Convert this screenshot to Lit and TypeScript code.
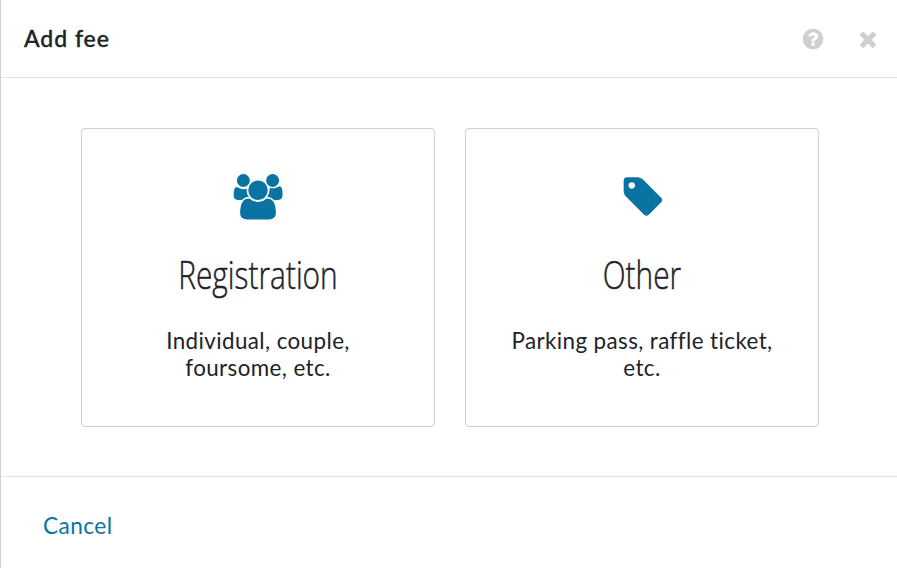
import { LitElement, html, css, svg } from "lit";
import { customElement, property } from "lit/decorators.js";

const icons = {
  help: {
    box: "0 0 1792 1792",
    path: "M1024 1376v-192q0-14-9-23t-23-9h-192q-14 0-23 9t-9 23v192q0 14 9 23t23 9h192q14 0 23-9t9-23zm256-672q0-88-55.5-163t-138.5-116-170-41q-243 0-371 213-15 24 8 42l132 100q7 6 19 6 16 0 25-12 53-68 86-92 34-24 86-24 48 0 85.5 26t37.5 59q0 38-20 61t-68 45q-63 28-115.5 86.5t-52.5 125.5v36q0 14 9 23t23 9h192q14 0 23-9t9-23q0-19 21.5-49.5t54.5-49.5q32-18 49-28.5t46-35 44.5-48 28-60.5 12.5-81zm384 192q0 209-103 385.5t-279.5 279.5-385.5 103-385.5-103-279.5-279.5-103-385.5 103-385.5 279.5-279.5 385.5-103 385.5 103 279.5 279.5 103 385.5z",
  },
  close: {
    box: "0 0 1792 1792",
    path: "M1490 1322q0 40-28 68l-136 136q-28 28-68 28t-68-28l-294-294-294 294q-28 28-68 28t-68-28l-136-136q-28-28-28-68t28-68l294-294-294-294q-28-28-28-68t28-68l136-136q28-28 68-28t68 28l294 294 294-294q28-28 68-28t68 28l136 136q28 28 28 68t-28 68l-294 294 294 294q28 28 28 68z",
  },
  tag: {
    box: "0 0 1792 1792",
    path: "M576 448q0-53-37.5-90.5t-90.5-37.5-90.5 37.5-37.5 90.5 37.5 90.5 90.5 37.5 90.5-37.5 37.5-90.5zm1067 576q0 53-37 90l-491 492q-39 37-91 37-53 0-90-37l-715-716q-38-37-64.5-101t-26.5-117v-416q0-52 38-90t90-38h416q53 0 117 26.5t102 64.5l715 714q37 39 37 91z",
  },
  users: {
    box: "0 0 2048 1792",
    path: "M657 896q-162 5-265 128h-134q-82 0-138-40.5t-56-118.5q0-353 124-353 6 0 43.5 21t97.5 42.5 119 21.5q67 0 133-23-5 37-5 66 0 159 93 287zm1071 637q0 120-73 189.5t-194 69.5h-874q-121 0-194-69.5t-73-189.5q0-53 3.5-103.5t14-109 26.5-108.5 43-97.5 62-81 85.5-53.5 111.5-20q10 0 43 21.5t73 48 107 48 135 21.5 135-21.5 107-48 73-48 43-21.5q61 0 111.5 20t85.5 53.5 62 81 43 97.5 26.5 108.5 14 109 3.5 103.5zm-1024-1277q0 106-75 181t-181 75-181-75-75-181 75-181 181-75 181 75 75 181zm704 384q0 159-112.5 271.5t-271.5 112.5-271.5-112.5-112.5-271.5 112.5-271.5 271.5-112.5 271.5 112.5 112.5 271.5zm576 225q0 78-56 118.5t-138 40.5h-134q-103-123-265-128 93-128 93-287 0-29-5-66 66 23 133 23 59 0 119-21.5t97.5-42.5 43.5-21q124 0 124 353zm-128-609q0 106-75 181t-181 75-181-75-75-181 75-181 181-75 181 75 75 181z",
  },
};

type IconName = keyof typeof icons;

const icon = (name: IconName) => html`<svg class=${name} viewBox=${icons[name].box} aria-hidden="true">
  ${svg`<path d=${icons[name].path}></path>`}
</svg>`;

@customElement("fee-card")
export class FeeCard extends LitElement {
  @property() icon: IconName = "tag";
  @property() heading = "";
  @property({ type: Array }) lines: string[] = [];

  static styles = css`
    :host {
      display: block;
      flex: none;
      box-sizing: border-box;
      width: 354px;
      height: 299px;
      padding-top: 45px;
      border: 1px solid #cdcfd2;
      border-radius: 4px;
      text-align: center;
      cursor: pointer;
    }
    svg {
      display: block;
      height: 45.5px;
      margin: 0 auto;
      fill: #0974a1;
    }
    .tag {
      padding-left: 1.4px;
    }
    .heading {
      margin: 32px 0 0;
      font: 300 38px/44px "Open Sans", sans-serif;
      transform: scaleX(0.785);
      -webkit-text-stroke: 0.45px #212327;
    }
    .text {
      margin: 31px 0 0;
      font-size: 22.4px;
      line-height: 27px;
      letter-spacing: 0.4px;
    }
    .line {
      display: block;
    }
  `;

  render() {
    return html`
      ${icon(this.icon)}
      <h2 class="heading">${this.heading}</h2>
      <p class="text">${this.lines.map((l) => html`<span class="line">${l}</span>`)}</p>
    `;
  }
}

@customElement("app-root")
export class AppRoot extends LitElement {
  static styles = css`
    :host {
      display: flex;
      flex-direction: column;
      box-sizing: border-box;
      height: 568px;
      border-left: 1px solid #cdcfd2;
      background: #fff;
      color: #212327;
      font-family: Lato, "Liberation Sans", sans-serif;
    }
    .header {
      display: flex;
      align-items: center;
      box-sizing: border-box;
      height: 78px;
      padding: 0 17px 0 23px;
      border-bottom: 1px solid #e2e3e4;
    }
    .title {
      flex: 1;
      margin: 0 0 2px;
      font-size: 23px;
      font-weight: 500;
      letter-spacing: 0.95px;
      -webkit-text-stroke: 0.35px #212327;
    }
    .tools {
      display: flex;
      gap: 30.7px;
    }
    button {
      padding: 0;
      border: 0;
      background: none;
      font: inherit;
      cursor: pointer;
    }
    .tool svg {
      display: block;
      width: 24px;
      height: 24px;
      fill: #cdcfd2;
    }
    .body {
      flex: 1;
      display: flex;
      gap: 30px;
      padding: 50px 0 0 80px;
    }
    .footer {
      display: flex;
      align-items: center;
      box-sizing: border-box;
      height: 92px;
      padding: 0 42px 0;
      border-top: 1px solid #e2e3e4;
    }
    .cancel {
      margin-top: 6px;
      color: #0974a1;
      font-size: 22.7px;
      line-height: 27px;
      letter-spacing: 0.4px;
    }
  `;

  render() {
    return html`
      <header class="header">
        <h1 class="title">Add fee</h1>
        <div class="tools">
          <button class="tool" aria-label="Help">${icon("help")}</button>
          <button class="tool" aria-label="Close">${icon("close")}</button>
        </div>
      </header>
      <main class="body">
        <fee-card icon="users" heading="Registration" .lines=${["Individual, couple,", "foursome, etc."]}></fee-card>
        <fee-card icon="tag" heading="Other" .lines=${["Parking pass, raffle ticket,", "etc."]}></fee-card>
      </main>
      <footer class="footer">
        <button class="cancel">Cancel</button>
      </footer>
    `;
  }
}
